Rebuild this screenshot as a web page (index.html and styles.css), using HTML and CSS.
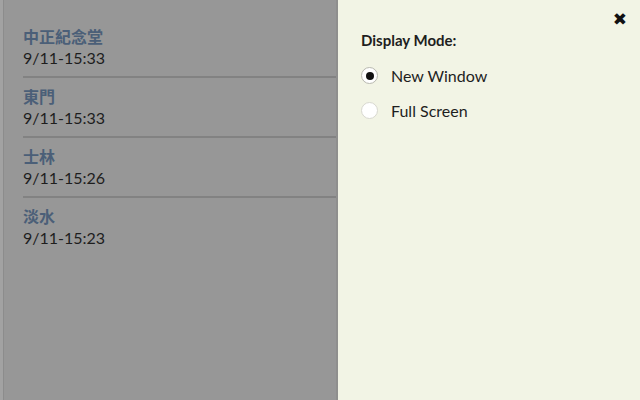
FILE: index.html
```html
<!DOCTYPE html>
<html>
	<head>
		<meta charset="UTF-8">
		<title>Display Mode</title>
		<link rel="stylesheet" href="styles.css">
	</head>
	<body>
		<div class="page">
			<div class="list-side">
				<div class="edge"></div>
				<ul class="list">
					<li class="item">
						<div class="name">中正紀念堂</div>
						<div class="time">9/11-15:33</div>
					</li>
					<li class="item">
						<div class="name">東門</div>
						<div class="time">9/11-15:33</div>
					</li>
					<li class="item">
						<div class="name">士林</div>
						<div class="time">9/11-15:26</div>
					</li>
					<li class="item last">
						<div class="name">淡水</div>
						<div class="time">9/11-15:23</div>
					</li>
				</ul>
			</div>
			<div class="panel">
				<span class="close">&#10006;</span>
				<h3 class="label">Display Mode:</h3>
				<label class="option"><span class="radio checked"></span>New Window</label>
				<label class="option"><span class="radio"></span>Full Screen</label>
			</div>
		</div>
	</body>
</html>
```

FILE: styles.css
```css
*{margin:0;padding:0;box-sizing:border-box;font-family:Lato,"Noto Sans CJK TC",sans-serif;}
ul{list-style:none;}
html,body{
	height:100%;
}
.page{
	display:flex;
	height:100%;
	width:640px;
}
.list-side{
	width:338px;
	display:flex;
	background:#979797;
	border-right:2px solid #8f8f8e;
}
.edge{
	width:4px;
	background:#a2a2a2;
	border-right:1px solid #8c8c8c;
}
.list{
	flex:1;
	padding:18px 0 0 19px;
}
.item{
	height:60px;
	padding:8px 0;
	border-bottom:2px solid #828282;
}
.item.last{
	border-bottom:none;
}
.name{
	font-size:16px;
	line-height:21px;
	color:#4b5f78;
	font-weight:bold;
}
.time{
	font-size:16px;
	line-height:21px;
	color:#1e1e1e;
}
.panel{
	flex:1;
	position:relative;
	background:#f2f4e5;
	padding:29px 0 0 23px;
}
.close{
	position:absolute;
	top:9px;
	right:13px;
	font-size:17px;
	color:#111;
	font-family:"DejaVu Sans",sans-serif;
}
.label{
	font-size:15px;
	font-weight:bold;
	color:#1e1e1e;
	line-height:22px;
	margin-bottom:7px;
}
.option{
	display:flex;
	align-items:center;
	font-size:16px;
	color:#1e1e1e;
	height:35px;
}
.radio{
	width:17px;
	height:17px;
	border-radius:50%;
	background:#fff;
	border:1px solid #d8d8d0;
	margin-right:13px;
	display:flex;
	align-items:center;
	justify-content:center;
}
.radio.checked{
	border-color:#b8b8b0;
}
.radio.checked::after{
	content:"";
	width:8px;
	height:8px;
	border-radius:50%;
	background:#111;
}
```
